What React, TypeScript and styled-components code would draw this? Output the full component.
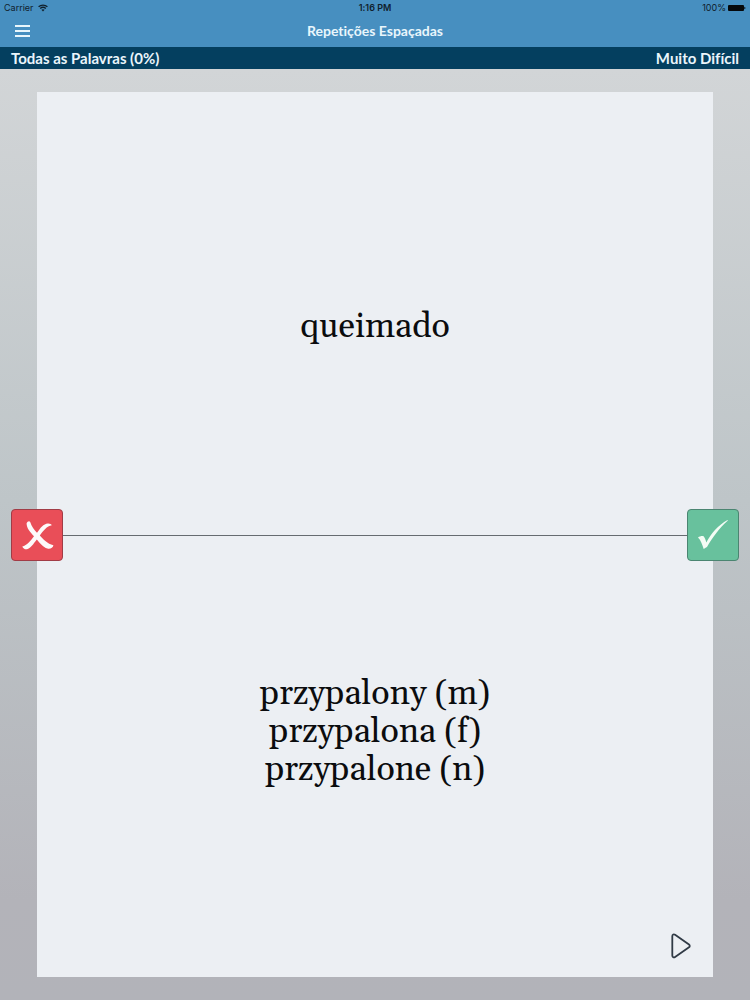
import React from 'react';
import styled, { createGlobalStyle } from 'styled-components';

const GlobalStyle = createGlobalStyle`
  *, *::before, *::after { box-sizing: border-box; }
  body { margin: 0; }
  button { font: inherit; color: inherit; border: 0; padding: 0; background: none; cursor: pointer; }
`;

const Screen = styled.div`
  display: flex;
  flex-direction: column;
  min-height: 100vh;
  font-family: Lato, 'Liberation Sans', sans-serif;
  font-variant-ligatures: none;
  background: linear-gradient(180deg, #d2d5d7 7%, #bec5c8 50%, #b3b3b9 90%, #b2b3b9 100%);
`;

const Header = styled.header`
  color: #e9f6fc;
  background: #478fc0;
`;

const StatusBar = styled.div`
  display: grid;
  grid-template-columns: 1fr auto 1fr;
  align-items: center;
  height: 15px;
  padding: 0 4px;
  font-family: Inter, sans-serif;
  font-size: 9px;
  line-height: 15px;
  color: #10202c;
`;

const StatusGroup = styled.div<{ $end?: boolean }>`
  display: flex;
  align-items: center;
  justify-content: ${({ $end }) => ($end ? 'flex-end' : 'flex-start')};
  gap: ${({ $end }) => ($end ? '2px' : '4px')};
`;

const Clock = styled.time`
  font-weight: 600;
`;

const NavBar = styled.nav`
  display: grid;
  grid-template-columns: 1fr auto 1fr;
  align-items: center;
  height: 32px;
  padding: 0 15px;
`;

const MenuButton = styled.button`
  display: flex;
  justify-self: start;
`;

const Title = styled.h1`
  margin: 0;
  font-size: 14px;
  line-height: 20px;
  font-weight: 700;
`;

const InfoBar = styled.div`
  display: flex;
  align-items: center;
  justify-content: space-between;
  height: 22px;
  padding: 0 11px;
  font-size: 15px;
  line-height: 22px;
  font-weight: 700;
  color: #eaf5fb;
  background: #043f5f;
`;

const Main = styled.main`
  display: flex;
  flex: 1;
  padding: 23px 37px;
`;

const Card = styled.article`
  position: relative;
  display: grid;
  grid-template-rows: 1fr 1fr;
  flex: 1;
  background: #eceff3;
`;

const Face = styled.section<{ $front?: boolean }>`
  display: flex;
  flex-direction: column;
  padding: ${({ $front }) => ($front ? '28px 18px 0' : '0 18px 14px')};
  border-top: ${({ $front }) => ($front ? '0' : '1px solid #666b70')};
`;

const Words = styled.p`
  display: flex;
  flex: 1;
  flex-direction: column;
  align-items: center;
  justify-content: center;
  margin: 0;
  font-family: Gelasio, Georgia, 'Liberation Serif', serif;
  font-size: 34px;
  line-height: 38px;
  color: #0b0c0e;
`;

const PlayButton = styled.button`
  display: flex;
  align-self: flex-end;
  padding: 4px;
`;

const AnswerButton = styled.button<{ $known?: boolean }>`
  position: absolute;
  top: 50%;
  ${({ $known }) => ($known ? 'right' : 'left')}: -26px;
  display: flex;
  align-items: center;
  justify-content: center;
  width: 52px;
  height: 52px;
  border: 1px solid ${({ $known }) => ($known ? '#4b8571' : '#a13c46')};
  border-radius: 4px;
  background: ${({ $known }) => ($known ? '#68c19d' : '#e94e58')};
  transform: translateY(-50%);
`;

const WifiIcon = () => (
  <svg width="10" height="8" viewBox="0 0 10 8" fill="none" stroke="currentColor" aria-hidden="true">
    <path d="M.6 2.8C3 .5 7 .5 9.4 2.8M2.2 4.5c1.6-1.4 4-1.4 5.6 0" strokeWidth="1.3" />
    <path d="M3.4 5.8c.9-.8 2.3-.8 3.2 0L5 7.6z" fill="currentColor" stroke="none" />
  </svg>
);

const BatteryIcon = () => (
  <svg width="18" height="8" viewBox="0 0 18 8" fill="#05080b" aria-hidden="true">
    <rect x="0" y="1" width="16" height="6" rx="1" />
    <path d="M16.4 2.8c1.4.2 1.4 2.2 0 2.4z" />
  </svg>
);

const MenuIcon = () => (
  <svg width="15" height="12" viewBox="0 0 15 12" fill="#e9f6fc" aria-hidden="true">
    <path d="M0 0h15v2H0zM0 5h15v2H0zM0 10h15v2H0z" />
  </svg>
);

const CrossIcon = () => (
  <svg width="50" height="50" viewBox="0 0 50 50" fill="#fdfafa" aria-hidden="true">
    <path d="M14.600 13.200C15.400 11.300 17.500 10.200 18.300 12.200C19.600 16.600 22.200 19.800 25 22.800C28.200 18 31.600 13.600 35.800 13.400C37.800 13.300 39.300 14 39.800 15.200C34.900 16 31.200 20.800 27.800 25.500C31.500 29.500 35.300 33.800 41.400 35.200C41 37.900 38.200 39.200 35.400 38.500C31 37.200 27.800 32.900 24.800 29.500C21.300 34.200 18.400 38.300 15 39.200C13 39.700 11.200 38.300 10.300 36.400C15 35.400 18.400 30.800 22 26.200C18 21.800 14.600 18.400 14.600 13.200Z" />
  </svg>
);

const CheckIcon = () => (
  <svg width="50" height="50" viewBox="0 0 50 50" fill="#f4fcf5" aria-hidden="true">
    <path d="M10 27.400C11.500 26.200 13.700 25.700 15.300 26C16.800 27.300 17.600 29.800 18.300 32.500C23 23.800 30.300 15 39.500 10L39.900 10.600C31.800 17.600 24.200 28 19 37C17.500 37.500 16.900 38.300 15.700 38.900C14.200 34.500 12.900 30.200 10 27.400Z" />
  </svg>
);

const PlayIcon = () => (
  <svg width="20" height="26" viewBox="0 0 20 26" fill="none" stroke="#303a45" strokeWidth="1.8" strokeLinejoin="round" aria-hidden="true">
    <path d="M1.300 3.200v19.400c0 1.600 1.500 2.300 2.800 1.400L18 14.200c1-.7 1-1.900 0-2.600L4.100 1.800C2.800.9 1.300 1.600 1.300 3.200z" />
  </svg>
);

export default function App() {
  return (
    <Screen>
      <GlobalStyle />
      <Header>
        <StatusBar>
          <StatusGroup>
            <span>Carrier</span>
            <WifiIcon />
          </StatusGroup>
          <Clock>1:16 PM</Clock>
          <StatusGroup $end>
            <span>100%</span>
            <BatteryIcon />
          </StatusGroup>
        </StatusBar>
        <NavBar>
          <MenuButton type="button" aria-label="Menu">
            <MenuIcon />
          </MenuButton>
          <Title>Repetições Espaçadas</Title>
        </NavBar>
        <InfoBar>
          <span>Todas as Palavras (0%)</span>
          <span>Muito Difícil</span>
        </InfoBar>
      </Header>
      <Main>
        <Card>
          <Face $front lang="pt">
            <Words>queimado</Words>
          </Face>
          <Face lang="pl">
            <Words>
              <span>przypalony (m)</span>
              <span>przypalona (f)</span>
              <span>przypalone (n)</span>
            </Words>
            <PlayButton type="button" aria-label="Ouvir">
              <PlayIcon />
            </PlayButton>
          </Face>
          <AnswerButton type="button" aria-label="Não sei">
            <CrossIcon />
          </AnswerButton>
          <AnswerButton $known type="button" aria-label="Sei">
            <CheckIcon />
          </AnswerButton>
        </Card>
      </Main>
    </Screen>
  );
}
